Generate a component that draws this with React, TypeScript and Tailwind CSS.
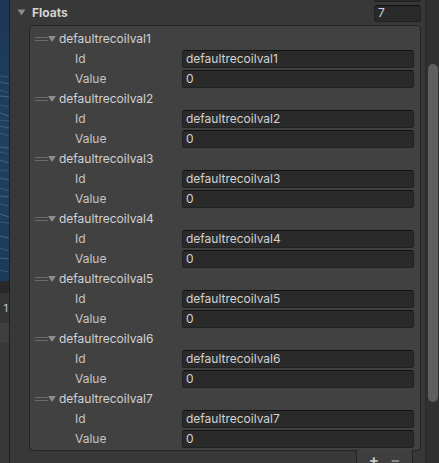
import React from 'react'

const items = [1, 2, 3, 4, 5, 6, 7].map(n => ({ id: `defaultrecoilval${n}`, value: '0' }))

function Tri({ className = '' }: { className?: string }) {
  return (
    <svg width="8" height="7" viewBox="0 0 8 7" className={className}>
      <path d="M0 0.5 H8 L4 6.5 Z" fill="currentColor" />
    </svg>
  )
}

function Field({ text }: { text: string }) {
  return (
    <div className="h-[18px] flex items-center rounded-[3px] bg-[#2a2a2a] border border-[#212121] border-t-[#111] px-[3px] text-[#d2d2d2] leading-none">
      {text}
    </div>
  )
}

function SceneStrip() {
  return (
    <div className="w-[9px] flex flex-col shrink-0">
      <div className="h-[281px] shrink-0 relative overflow-hidden bg-gradient-to-b from-[#1d3756] via-[#21405f] to-[#1d3a5a]">
        <svg width="9" height="281" className="absolute inset-0">
          {[76, 82, 90, 96, 105, 113, 120, 126, 133, 147, 152, 160, 170, 178, 188, 196, 204, 214, 222, 236, 248, 258, 270].map((y, i) => (
            <line key={y} x1="0" y1={y} x2="9" y2={y + (i % 3) + 1} stroke={i % 2 ? '#4a6480' : '#3c5876'} strokeWidth="1" />
          ))}
        </svg>
      </div>
      <div className="h-[12px] shrink-0 bg-[#282828]" />
      <div className="h-[30px] shrink-0 bg-[#353535] flex items-center justify-end pr-px text-[11px] text-[#c4c4c4] leading-none">
        <span>1</span>
      </div>
      <div className="h-[20px] shrink-0 bg-[#3f3f3f]" />
      <div className="flex-1 bg-[#383838]" />
    </div>
  )
}

export default function App() {
  return (
    <div
      className="w-[439px] h-[463px] flex bg-[#383838] overflow-hidden text-[12px] text-[#c4c4c4]"
      style={{ fontFamily: 'Inter, "Noto Sans", sans-serif' }}
    >
      <SceneStrip />
      <div className="w-px bg-[#1f1f1f] shrink-0" />

      {/* inspector */}
      <div className="flex-1 flex flex-col min-w-0">
        <div className="h-[25px] shrink-0 flex items-center pl-[7px] pr-[4px] relative">
          <Tri className="text-[#8c8c8c] w-[9px] h-[7px]" />
          <span className="ml-[6px] font-bold text-[#d2d2d2]">Floats</span>
          <div className="ml-auto w-[47px] h-[17px] mt-[1px] flex items-center rounded-[3px] bg-[#2a2a2a] border border-[#212121] border-t-[#111] px-[3px] text-[#d2d2d2] leading-none">
            7
          </div>
          <div className="absolute right-[4px] top-0 w-[47px] h-[2px] bg-[#2a2a2a] border-b border-[#212121] rounded-b-[3px]" />
        </div>

        <div className="shrink-0 ml-[19px] mr-[4px] rounded-[4px] border border-[#232323] bg-[#414141] pt-[3px] pb-[1px]">
          {items.map(it => (
            <div key={it.id} className="flex flex-col">
              <div className="h-[20px] flex items-center">
                <div className="ml-[5px] w-[13px] flex flex-col gap-[2px]">
                  <div className="h-px bg-[#6a6a6a]" />
                  <div className="h-px bg-[#6a6a6a]" />
                </div>
                <Tri className="text-[#8c8c8c] w-[8px] h-[8px]" />
                <span className="ml-[3px] text-[#d2d2d2]">{it.id}</span>
              </div>
              <div className="h-[20px] flex items-center">
                <span className="ml-[45px] w-[107px]">Id</span>
                <div className="flex-1 mr-[6px]"><Field text={it.id} /></div>
              </div>
              <div className="h-[20px] flex items-center">
                <span className="ml-[45px] w-[107px]">Value</span>
                <div className="flex-1 mr-[6px]"><Field text={it.value} /></div>
              </div>
            </div>
          ))}
        </div>

        <div className="shrink-0 flex justify-end mr-[12px] -mt-px">
          <div className="w-[57px] h-[20px] bg-[#3e3e3e] border-x border-[#232323] flex items-start justify-around px-[6px] pt-[2px] text-[#c4c4c4] font-bold text-[15px] leading-none">
            <span>+</span>
            <span className="text-[#8a8a8a]">−</span>
          </div>
        </div>
      </div>

      {/* scrollbar */}
      <div className="w-[14px] shrink-0 bg-[#303030] border-l border-[#2a2a2a] pt-[64px] pl-[2px]">
        <div className="w-[10px] h-[338px] rounded-full bg-[#5f5f5f]" />
      </div>
    </div>
  )
}
